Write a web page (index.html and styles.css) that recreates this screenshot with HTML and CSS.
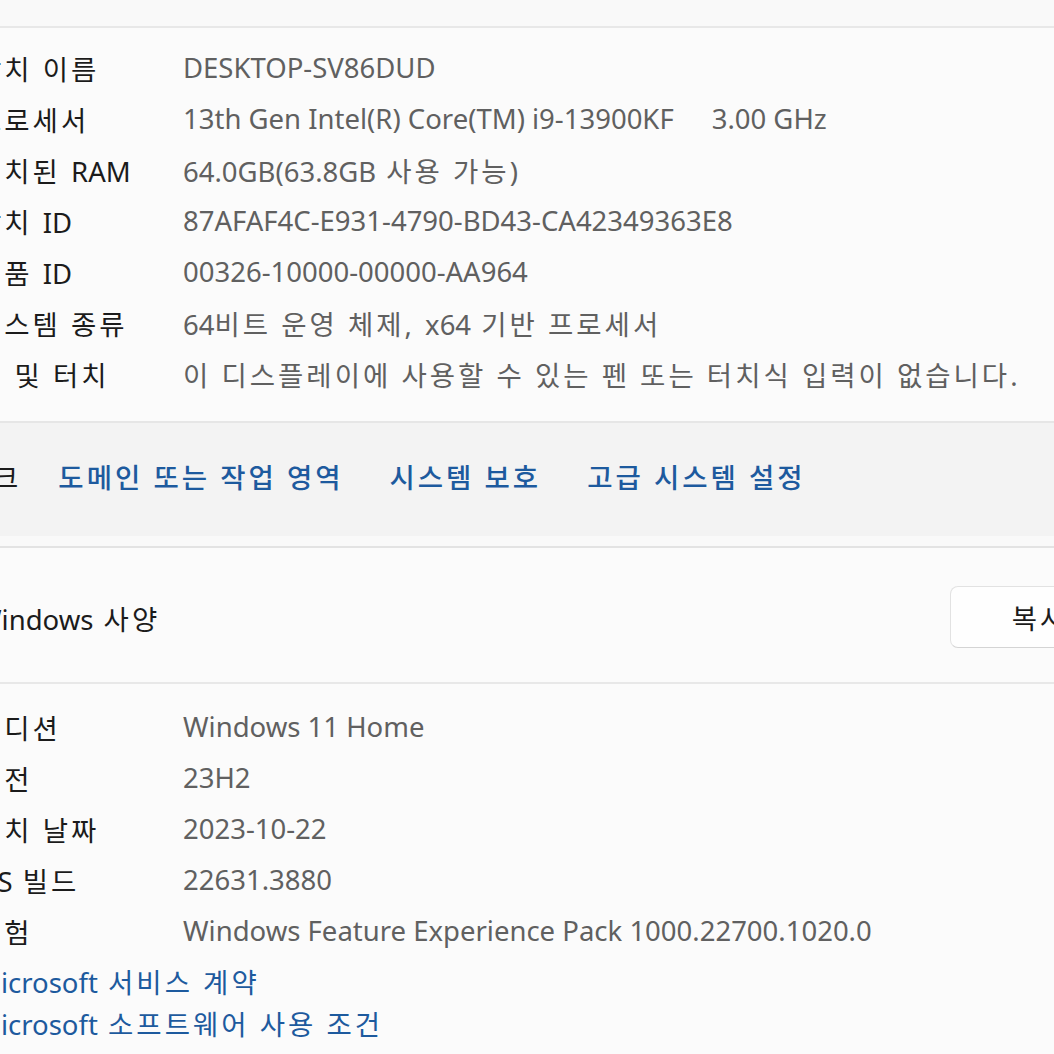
FILE: index.html
```html
<!DOCTYPE html>
<html lang="ko">
<head>
<meta charset="utf-8">
<link rel="stylesheet" href="styles.css">
</head>
<body>
<div class="page">
  <section class="expander">
    <div class="top-strip"></div>
    <div class="content">
      <div class="row"><span class="label ko">장치 이름</span><span class="value">DESKTOP-SV86DUD</span></div>
      <div class="row"><span class="label ko">프로세서</span><span class="value">13th Gen Intel(R) Core(TM) i9-13900KF<span class="gap"></span>3.00 GHz</span></div>
      <div class="row"><span class="label"><span class="ko">설치된 </span>RAM</span><span class="value">64.0GB(63.8GB<span class="ko"> 사용 가능</span>)</span></div>
      <div class="row"><span class="label"><span class="ko">장치 </span>ID</span><span class="value">87AFAF4C-E931-4790-BD43-CA42349363E8</span></div>
      <div class="row"><span class="label"><span class="ko">제품 </span>ID</span><span class="value">00326-10000-00000-AA964</span></div>
      <div class="row"><span class="label ko">시스템 종류</span><span class="value">64<span class="ko">비트 운영 체제, </span>x64<span class="ko"> 기반 프로세서</span></span></div>
      <div class="row"><span class="label ko">펜 및 터치</span><span class="value ko">이 디스플레이에 사용할 수 있는 펜 또는 터치식 입력이 없습니다.</span></div>
    </div>
    <div class="related ko">
      <span class="related-title">관련 링크</span>
      <a class="link">도메인 또는 작업 영역</a>
      <a class="link">시스템 보호</a>
      <a class="link">고급 시스템 설정</a>
    </div>
  </section>

  <section class="expander second">
    <div class="header">
      <span class="header-title">Windows<span class="ko"> 사양</span></span>
      <button class="copy-btn ko">복사</button>
    </div>
    <div class="content content-2">
      <div class="row"><span class="label ko">에디션</span><span class="value">Windows 11 Home</span></div>
      <div class="row"><span class="label ko">버전</span><span class="value">23H2</span></div>
      <div class="row"><span class="label ko">설치 날짜</span><span class="value">2023-10-22</span></div>
      <div class="row"><span class="label">OS<span class="ko"> 빌드</span></span><span class="value">22631.3880</span></div>
      <div class="row"><span class="label ko">경험</span><span class="value">Windows Feature Experience Pack 1000.22700.1020.0</span></div>
      <a class="link small-link first-link">Microsoft<span class="ko"> 서비스 계약</span></a>
      <a class="link small-link">Microsoft<span class="ko"> 소프트웨어 사용 조건</span></a>
    </div>
  </section>
</div>
</body>
</html>
```

FILE: styles.css
```css
html, body {
  margin: 0;
  padding: 0;
  width: 1054px;
  height: 1054px;
  overflow: hidden;
  background: #f9f9f9;
  font-family: "Noto Sans", "Noto Sans CJK KR", sans-serif;
  font-size: 27.5px;
}

.ko {
  letter-spacing: 3px;
}

.page {
  width: 1210px;
  margin-left: -60px;
  display: flex;
  flex-direction: column;
}

.expander {
  display: flex;
  flex-direction: column;
}

.top-strip {
  height: 26px;
  background: #f9f9f9;
  border-bottom: 2px solid #e8e8e8;
}

.content {
  background: #fbfbfb;
  padding: 14px 0 22px 36px;
  display: flex;
  flex-direction: column;
}

.row {
  display: flex;
  align-items: center;
  height: 51px;
}

.label {
  width: 207px;
  flex: none;
  color: #1b1b1b;
  white-space: nowrap;
}

.value {
  color: #606060;
  white-space: nowrap;
}

.value.ko {
  letter-spacing: 3px;
}

.gap {
  display: inline-block;
  width: 38px;
}

.related {
  background: #f3f3f3;
  border-top: 2px solid #e6e6e6;
  height: 115px;
  box-sizing: border-box;
  padding-bottom: 8px;
  display: flex;
  align-items: center;
}

.related-title {
  color: #1b1b1b;
  margin-left: -42px;
  margin-right: 37px;
}

.link {
  color: #1d5a9e;
  font-weight: 500;
  margin-right: 46px;
  white-space: nowrap;
}

.second {
  margin-top: 10px;
}

.header {
  background: #fbfbfb;
  border-top: 2px solid #e3e3e3;
  border-bottom: 2px solid #e8e8e8;
  height: 134px;
  display: flex;
  align-items: center;
  padding-left: 36px;
  padding-right: 20px;
}

.header-title {
  color: #1b1b1b;
  flex: 1;
  padding-top: 5px;
}

.copy-btn {
  width: 180px;
  height: 62px;
  margin-top: 4px;
  background: #fefefe;
  border: 1px solid #e2e2e2;
  border-bottom-color: #d4d4d4;
  border-radius: 8px;
  font-family: inherit;
  font-size: 27.5px;
  color: #1b1b1b;
}

.content-2 {
  padding-top: 17px;
}

.small-link {
  font-weight: 400;
  line-height: 42px;
  display: block;
  margin-right: 0;
}

.first-link {
  margin-top: 6px;
}
```
